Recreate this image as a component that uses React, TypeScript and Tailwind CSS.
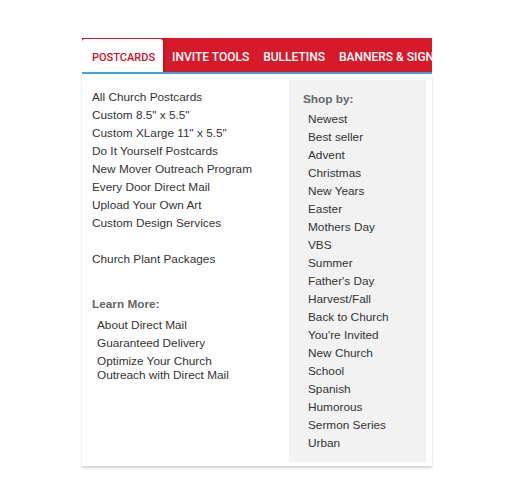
import React from "react";

const tabs = ["POSTCARDS", "INVITE TOOLS", "BULLETINS", "BANNERS & SIGNS"];

const mainLinks = [
  "All Church Postcards",
  'Custom 8.5" x 5.5"',
  'Custom XLarge 11" x 5.5"',
  "Do It Yourself Postcards",
  "New Mover Outreach Program",
  "Every Door Direct Mail",
  "Upload Your Own Art",
  "Custom Design Services",
];

const learnLinks = ["About Direct Mail", "Guaranteed Delivery", "Optimize Your Church Outreach with Direct Mail"];

const shopBy = [
  "Newest",
  "Best seller",
  "Advent",
  "Christmas",
  "New Years",
  "Easter",
  "Mothers Day",
  "VBS",
  "Summer",
  "Father's Day",
  "Harvest/Fall",
  "Back to Church",
  "You're Invited",
  "New Church",
  "School",
  "Spanish",
  "Humorous",
  "Sermon Series",
  "Urban",
];

export default function App() {
  return (
    <div className="min-h-[503px] w-[514px] bg-white pt-[38px] font-['Liberation_Sans',Arial,sans-serif]">
      <div className="ml-[82px] w-[350px]">
        {/* tab bar */}
        <div className="relative z-10 flex h-[36px] items-end overflow-hidden border-b-2 border-[#3aa6dd] bg-[#d71a2a] font-['Roboto',sans-serif] font-medium">
          {tabs.map((t, i) =>
            i === 0 ? (
              <div
                key={t}
                className="-mb-[2px] flex h-[35px] shrink-0 items-center rounded-t-[3px] bg-white pl-[10px] pr-[8px] pt-[3px] text-[11px] text-[#c8102e] shadow-[2px_0_3px_rgba(0,0,0,0.15)]"
              >
                {t}
              </div>
            ) : (
              <div
                key={t}
                className="flex h-[34px] shrink-0 items-center whitespace-nowrap px-[7px] pt-[3px] text-[12px] text-white [&:nth-child(2)]:ml-[2px]"
              >
                {t}
              </div>
            )
          )}
        </div>

        {/* dropdown */}
        <div className="flex bg-white pb-[4px] shadow-[0_2px_2px_rgba(0,0,0,0.18)]">
          <div className="w-[207px] pl-[10px] pt-[14px] text-[11.8px] leading-[18px] text-[#333]">
            {mainLinks.map((l) => (
              <div key={l}>{l}</div>
            ))}
            <div className="mt-[18px]">Church Plant Packages</div>

            <div className="mt-[27px] font-bold text-[#666]">Learn More:</div>
            <div className="mt-[3px] pl-[5px]">
              {learnLinks.map((l) => (
                <div key={l} className="w-[150px] py-[2px] leading-[14px]">
                  {l}
                </div>
              ))}
            </div>
          </div>

          <div className="mt-[6px] w-[137px] bg-[#f2f2f2] px-[14px] pb-[10px] pt-[10px] text-[11.8px] leading-[18px] text-[#333]">
            <div className="mb-[2px] font-bold text-[#666]">Shop by:</div>
            {shopBy.map((s) => (
              <div key={s} className="pl-[5px]">
                {s}
              </div>
            ))}
          </div>
        </div>
      </div>
    </div>
  );
}
